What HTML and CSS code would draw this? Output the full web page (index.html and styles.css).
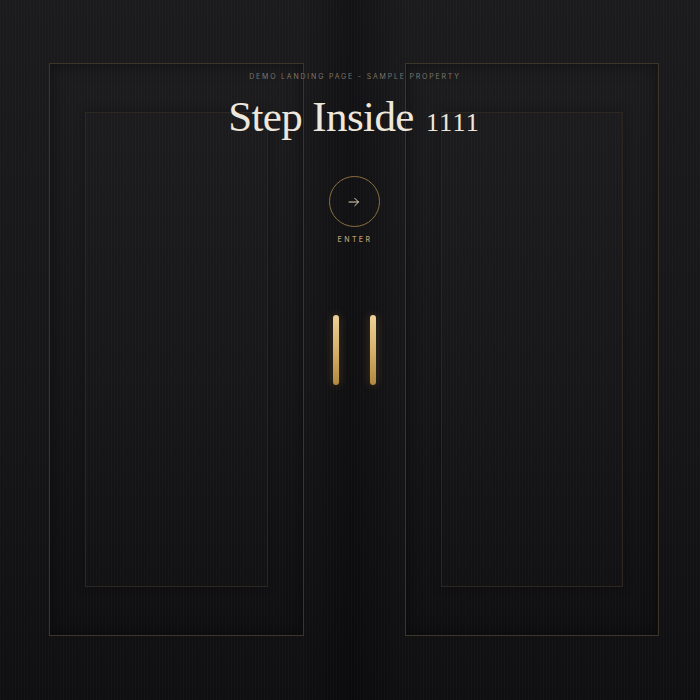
FILE: index.html
```html
<!DOCTYPE html>
<html lang="en">
<head>
<meta charset="utf-8">
<title>Step Inside 1111</title>
<link rel="stylesheet" href="styles.css">
</head>
<body>
<main class="stage">
  <div class="door">
    <div class="panel"></div>
  </div>
  <div class="seam">
    <span class="handle"></span>
    <span class="handle"></span>
  </div>
  <div class="door">
    <div class="panel"></div>
  </div>

  <header class="intro">
    <p class="eyebrow">Demo Landing Page - Sample Property</p>
    <h1 class="title">Step Inside <span class="num">1111</span></h1>
    <a class="enter" href="#">
      <span class="enter-ring">
        <svg width="12" height="10" viewBox="0 0 12 10" aria-hidden="true">
          <path d="M1 5H10.5M6.8 1.3L10.5 5L6.8 8.7" fill="none" stroke="#e2d5b8" stroke-width="1" stroke-linecap="round" stroke-linejoin="round"/>
        </svg>
      </span>
      <span class="enter-label">Enter</span>
    </a>
  </header>
</main>
</body>
</html>
```

FILE: styles.css
```css
html, body {
  margin: 0;
  height: 100%;
}

body {
  background-color: #131215;
  background-image:
    repeating-linear-gradient(90deg, rgba(255,255,255,0.018) 0 1px, rgba(0,0,0,0) 1px 3px),
    linear-gradient(90deg, rgba(0,0,0,0) 43%, rgba(0,0,0,0.32) 50%, rgba(0,0,0,0) 58%),
    linear-gradient(180deg, #1b1a1d 0%, #161518 55%, #0f0e11 100%);
  font-family: "Inter", "Liberation Sans", sans-serif;
  overflow: hidden;
}

.stage {
  position: relative;
  display: grid;
  grid-template-columns: 255px 101px 254px;
  width: 610px;
  height: 573px;
  margin: 63px 0 0 49px;
}

.door {
  box-sizing: border-box;
  border: 1px solid #3b352a;
  padding: 48px 35px;
  background: linear-gradient(180deg, rgba(255,255,255,0.006), rgba(0,0,0,0.08));
  box-shadow: inset 0 0 16px rgba(0,0,0,0.45);
}

.panel {
  height: 100%;
  border: 1px solid #2c2821;
  box-sizing: border-box;
  background: rgba(255,255,255,0.008);
  box-shadow: 0 0 10px rgba(0,0,0,0.25);
}

.seam {
  display: flex;
  justify-content: center;
  align-items: center;
  gap: 31px;
}

.handle {
  display: block;
  width: 6px;
  height: 70px;
  border-radius: 3px;
  background: linear-gradient(180deg, #ecd197 0%, #d6b16c 50%, #b3893f 100%);
  box-shadow: 0 0 10px rgba(210, 165, 80, 0.28);
}

.intro {
  position: absolute;
  top: 0;
  left: 0;
  right: 0;
  display: flex;
  flex-direction: column;
  align-items: center;
  padding-top: 9px;
}

.eyebrow {
  margin: 0;
  font-size: 7px;
  line-height: 9px;
  letter-spacing: 1.8px;
  margin-left: 2px;
  text-transform: uppercase;
  color: #7c766c;
}

.title {
  margin: 11px 0 0;
  font-family: "Liberation Serif", "Times New Roman", serif;
  font-weight: 400;
  font-size: 43px;
  line-height: 50px;
  letter-spacing: -0.6px;
  color: #ede7dc;
}

.num {
  font-size: 26px;
  letter-spacing: 1.2px;
  margin-left: 2px;
}

.enter {
  display: flex;
  flex-direction: column;
  align-items: center;
  gap: 8px;
  margin-top: 28px;
  text-decoration: none;
}

.enter-ring {
  display: flex;
  align-items: center;
  justify-content: center;
  box-sizing: border-box;
  width: 51px;
  height: 51px;
  border: 1px solid #8a6f3e;
  border-radius: 50%;
}

.enter-label {
  font-size: 7px;
  line-height: 9px;
  font-weight: 500;
  letter-spacing: 2.4px;
  margin-left: 2px;
  text-transform: uppercase;
  color: #b59e72;
}
```
